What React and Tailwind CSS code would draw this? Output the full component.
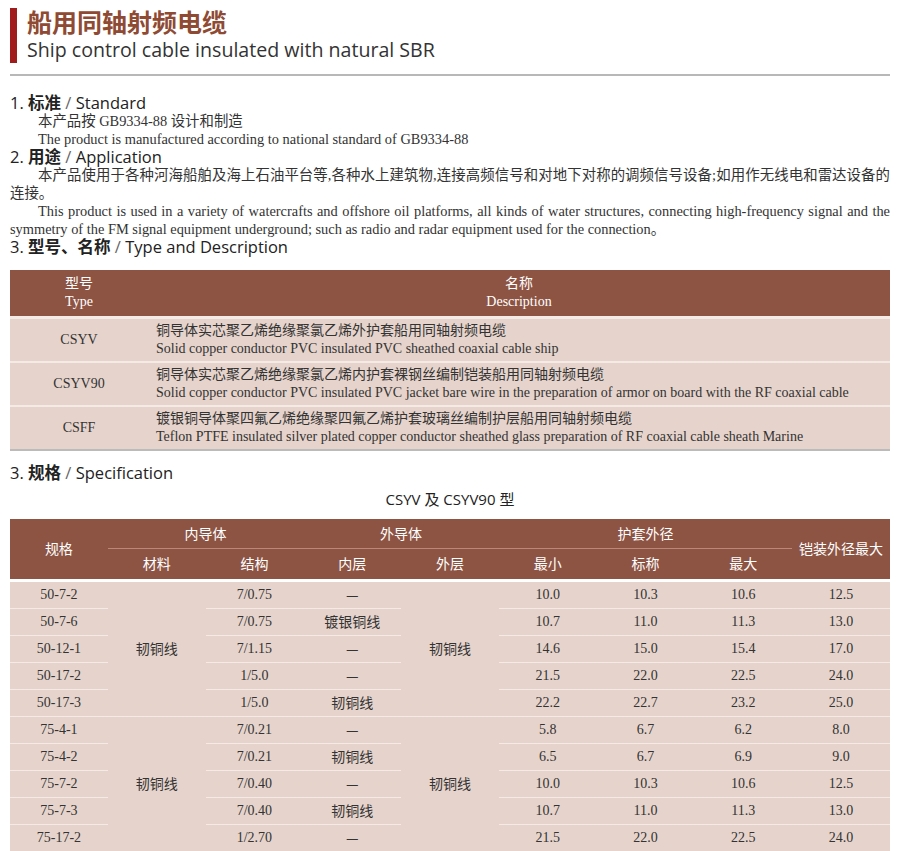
import React from "react";

const sans = { fontFamily: '"Open Sans","Noto Sans CJK SC",sans-serif' };
const serif = { fontFamily: '"Liberation Serif","Noto Sans CJK SC",serif' };
const cjk = { fontFamily: '"Liberation Serif","Noto Sans CJK SC",sans-serif' };

function H({ n, zh, en }) {
  return (
    <div className="text-[16.5px] leading-[18px] text-[#222]" style={sans}>
      {n}. <span className="font-bold">{zh}</span> <span className="text-[#666]">/</span> {en}
    </div>
  );
}

const types = [
  ["CSYV", "铜导体实芯聚乙烯绝缘聚氯乙烯外护套船用同轴射频电缆", "Solid copper conductor PVC insulated PVC sheathed coaxial cable ship"],
  ["CSYV90", "铜导体实芯聚乙烯绝缘聚氯乙烯内护套裸钢丝编制铠装船用同轴射频电缆", "Solid copper conductor PVC insulated PVC jacket bare wire in the preparation of armor on board with the RF coaxial cable"],
  ["CSFF", "镀银铜导体聚四氟乙烯绝缘聚四氟乙烯护套玻璃丝编制护层船用同轴射频电缆", "Teflon PTFE insulated silver plated copper conductor sheathed glass preparation of RF coaxial cable sheath Marine"],
];

const rows = [
  ["50-7-2", "7/0.75", "—", "10.0", "10.3", "10.6", "12.5"],
  ["50-7-6", "7/0.75", "镀银铜线", "10.7", "11.0", "11.3", "13.0"],
  ["50-12-1", "7/1.15", "—", "14.6", "15.0", "15.4", "17.0"],
  ["50-17-2", "1/5.0", "—", "21.5", "22.0", "22.5", "24.0"],
  ["50-17-3", "1/5.0", "韧铜线", "22.2", "22.7", "23.2", "25.0"],
  ["75-4-1", "7/0.21", "—", "5.8", "6.7", "6.2", "8.0"],
  ["75-4-2", "7/0.21", "韧铜线", "6.5", "6.7", "6.9", "9.0"],
  ["75-7-2", "7/0.40", "—", "10.0", "10.3", "10.6", "12.5"],
  ["75-7-3", "7/0.40", "韧铜线", "10.7", "11.0", "11.3", "13.0"],
  ["75-17-2", "1/2.70", "—", "21.5", "22.0", "22.5", "24.0"],
];

export default function App() {
  const cell = "bg-[#e6d4cc] flex items-center justify-center text-[14px] text-[#333] h-[26px]";
  return (
    <div className="w-[900px] h-[851px] overflow-hidden bg-white relative">
      <div className="flex items-stretch gap-[10px] pl-[10px] pt-[8px]">
        <div className="w-[7px] bg-[#a01c1c]" />
        <div>
          <div className="text-[25px] leading-[28px] font-bold text-[#8e4a33]" style={sans}>船用同轴射频电缆</div>
          <div className="text-[19.6px] leading-[26px] text-[#333] mt-[1px]" style={sans}>Ship control cable insulated with natural SBR</div>
        </div>
      </div>
      <div className="mx-[10px] mt-[11px] h-[2px] bg-[#b8b8b8]" />
      <div className="px-[10px] mt-[18px]">
        <H n="1" zh="标准" en="Standard" />
        <div className="pl-[28px] text-[14.4px] leading-[18px] text-[#333]" style={serif}>
          <div>本产品按 GB9334-88 设计和制造</div>
          <div>The product is manufactured according to national standard of GB9334-88</div>
        </div>
        <H n="2" zh="用途" en="Application" />
        <div className="text-[14.4px] leading-[18px] text-[#333] text-justify" style={serif}>
          <div className="indent-[28px]">本产品使用于各种河海船舶及海上石油平台等,各种水上建筑物,连接高频信号和对地下对称的调频信号设备;如用作无线电和雷达设备的连接。</div>
          <div className="indent-[28px]">This product is used in a variety of watercrafts and offshore oil platforms, all kinds of water structures, connecting high-frequency signal and the symmetry of the FM signal equipment underground; such as radio and radar equipment used for the connection。</div>
        </div>
        <H n="3" zh="型号、名称" en="Type and Description" />
        <div className="mt-[14px]">
          <div className="flex bg-[#8d5443] text-white text-[14px] leading-[18px] h-[46px] items-center" style={serif}>
            <div className="w-[138px] text-center">型号<br />Type</div>
            <div className="flex-1 text-center">名称<br />Description</div>
          </div>
          <div className="h-[3px] bg-[#f4ebe7]" />
          <div className="flex flex-col gap-[2px] bg-[#f4ebe7] border-b-2 border-[#bbb]">
            {types.map(([t, z, e]) => (
              <div key={t} className="flex bg-[#e6d4cc] h-[42px] items-center text-[14px] leading-[18px] text-[#333]" style={serif}>
                <div className="w-[138px] text-center">{t}</div>
                <div className="flex-1 pl-[8px]">
                  <div style={cjk}>{z}</div>
                  <div>{e}</div>
                </div>
              </div>
            ))}
          </div>
        </div>
        <div className="mt-[13px]"><H n="3" zh="规格" en="Specification" /></div>
        <div className="text-center text-[15px] mt-[6px] text-[#222]" style={sans}>CSYV 及 CSYV90 型</div>
        <div className="mt-[8px]" style={cjk}>
          <div className="grid grid-cols-9 bg-[#8d5443] text-white text-[14px]" style={sans}>
            <div className="row-span-2 flex items-center justify-center h-[60px]">规格</div>
            <div className="col-span-2 flex items-center justify-center h-[30px] border-b border-[#b98878]">内导体</div>
            <div className="col-span-2 flex items-center justify-center h-[30px] border-b border-[#b98878]">外导体</div>
            <div className="col-span-3 flex items-center justify-center h-[30px] border-b border-[#b98878]">护套外径</div>
            <div className="row-span-2 flex items-center justify-center">铠装外径最大</div>
            {["材料", "结构", "内层", "外层", "最小", "标称", "最大"].map((h) => (
              <div key={h} className="flex items-center justify-center h-[30px]">{h}</div>
            ))}
          </div>
          <div className="h-[3px] bg-white" />
          <div className="grid grid-cols-9 gap-y-px bg-[#f4ebe7]" style={serif}>
            {rows.map((r, i) => (
              <React.Fragment key={r[0]}>
                <div className={cell} style={{ gridRow: i + 1, gridColumn: 1 }}>{r[0]}</div>
                {(i === 0 || i === 5) && (
                  <>
                    <div className="bg-[#e6d4cc] flex items-center justify-center text-[14px] text-[#333]" style={{ gridRow: `${i + 1} / span 5`, gridColumn: 2, fontFamily: '"Noto Sans CJK SC",sans-serif' }}>韧铜线</div>
                    <div className="bg-[#e6d4cc] flex items-center justify-center text-[14px] text-[#333]" style={{ gridRow: `${i + 1} / span 5`, gridColumn: 5, fontFamily: '"Noto Sans CJK SC",sans-serif' }}>韧铜线</div>
                  </>
                )}
                <div className={cell} style={{ gridRow: i + 1, gridColumn: 3 }}>{r[1]}</div>
                <div className={cell} style={{ gridRow: i + 1, gridColumn: 4, fontFamily: '"Noto Sans CJK SC",sans-serif' }}>{r[2]}</div>
                {r.slice(3).map((v, j) => (
                  <div key={j} className={cell} style={{ gridRow: i + 1, gridColumn: 6 + j }}>{v}</div>
                ))}
              </React.Fragment>
            ))}
          </div>
        </div>
      </div>
    </div>
  );
}
